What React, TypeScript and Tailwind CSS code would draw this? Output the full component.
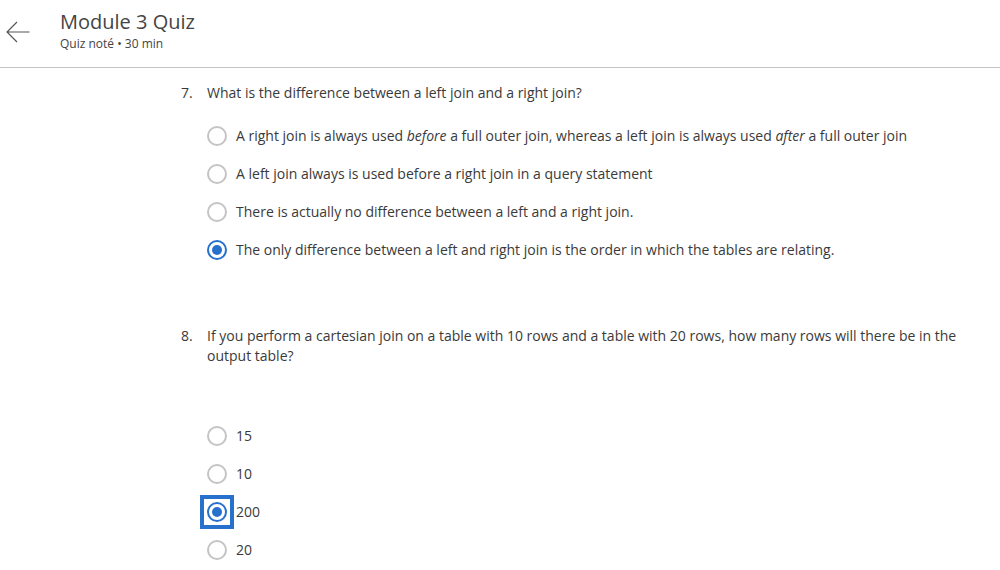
import React from "react";

const font = { fontFamily: '"Open Sans", "Liberation Sans", sans-serif' };

function Radio({ checked, focused }: { checked?: boolean; focused?: boolean }) {
  return (
    <div className="relative shrink-0">
      {focused && <div className="absolute -inset-[7px] border-4 border-[#2771cc]" />}
      <div
        className={
          "w-[20px] h-[20px] rounded-full flex items-center justify-center border-2 " +
          (checked ? "border-[#2771cc]" : "border-[#c4c4c4]")
        }
      >
        {checked && <div className="w-[10px] h-[10px] rounded-full bg-[#2771cc]" />}
      </div>
    </div>
  );
}

function Option({ children, checked, focused }: { children: React.ReactNode; checked?: boolean; focused?: boolean }) {
  return (
    <div className="h-[38px] flex items-center gap-[9px]">
      <Radio checked={checked} focused={focused} />
      <div className="text-[14px] leading-[20px] text-[#3a3a3a]">{children}</div>
    </div>
  );
}

export default function App() {
  return (
    <div className="w-[1000px] h-[570px] bg-white overflow-hidden" style={font}>
      <div className="h-[68px] border-b border-[#c4c4c4] flex">
        <div className="pl-[6px] pt-[21px] w-[60px]">
          <svg width="24" height="22" viewBox="0 0 24 22" fill="none" stroke="#555" strokeWidth="1.2">
            <path d="M23.5 11H1M11 1L1 11L11 21" />
          </svg>
        </div>
        <div className="pt-[8px]">
          <div className="text-[20px] leading-[28px] text-[#444]">Module 3 Quiz</div>
          <div className="text-[12px] leading-[16px] text-[#444]">Quiz noté • 30 min</div>
        </div>
      </div>

      <div className="ml-[181px] w-[790px]">
        <div className="mt-[15px] flex text-[14px] leading-[20px] text-[#3a3a3a]">
          <div className="w-[26px] shrink-0">7.</div>
          <div>What is the difference between a left join and a right join?</div>
        </div>
        <div className="ml-[26px] mt-[14px]">
          <Option>
            A right join is always used <i>before</i> a full outer join, whereas a left join is always used <i>after</i> a full outer join
          </Option>
          <Option>A left join always is used before a right join in a query statement</Option>
          <Option>There is actually no difference between a left and a right join.</Option>
          <Option checked>The only difference between a left and right join is the order in which the tables are relating.</Option>
        </div>

        <div className="mt-[57px] flex text-[14px] leading-[20px] text-[#3a3a3a]">
          <div className="w-[26px] shrink-0">8.</div>
          <div className="w-[755px]">
            If you perform a cartesian join on a table with 10 rows and a table with 20 rows, how many rows will there be in the output table?
          </div>
        </div>
        <div className="ml-[26px] mt-[51px]">
          <Option>15</Option>
          <Option>10</Option>
          <Option checked focused>200</Option>
          <Option>20</Option>
        </div>
      </div>
    </div>
  );
}
